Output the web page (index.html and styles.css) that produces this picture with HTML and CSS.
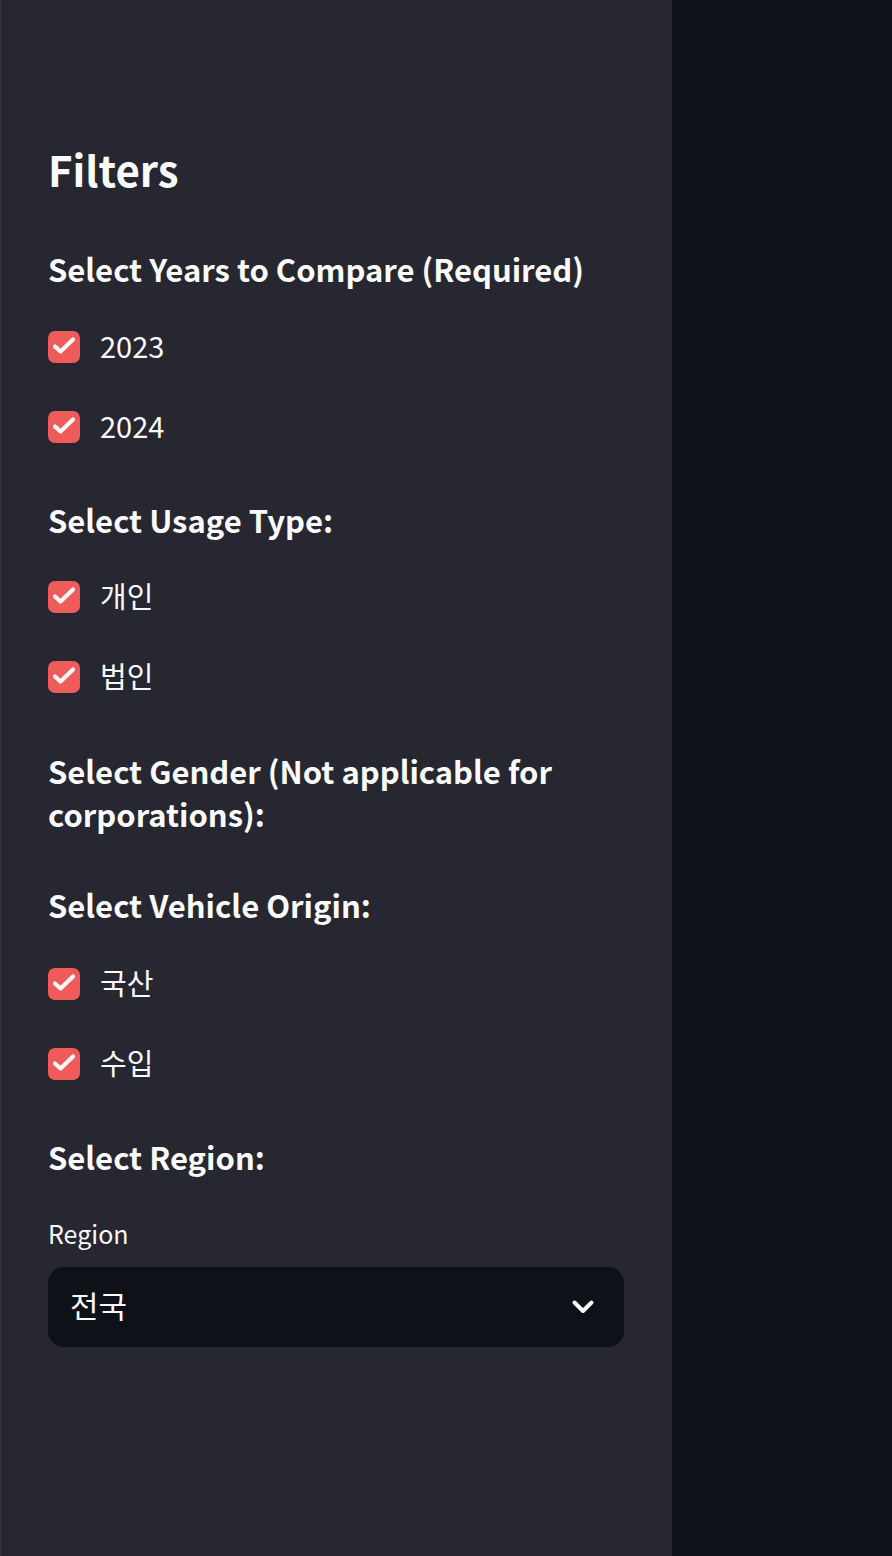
FILE: index.html
```html
<!DOCTYPE html>
<html lang="en">
<head>
<meta charset="utf-8">
<title>Filters</title>
<link rel="stylesheet" href="styles.css">
</head>
<body>
<div class="app">
  <aside class="sidebar">
    <h2 class="title">Filters</h2>

    <h3 class="heading h-years">Select Years to Compare (Required)</h3>
    <label class="check c-first"><span class="box"><svg viewBox="0 0 32 32"><path d="M7 15.5 L12.5 20.5 L25 8.5"/></svg></span><span class="lbl">2023</span></label>
    <label class="check"><span class="box"><svg viewBox="0 0 32 32"><path d="M7 15.5 L12.5 20.5 L25 8.5"/></svg></span><span class="lbl">2024</span></label>

    <h3 class="heading h-tight">Select Usage Type:</h3>
    <label class="check"><span class="box"><svg viewBox="0 0 32 32"><path d="M7 15.5 L12.5 20.5 L25 8.5"/></svg></span><span class="lbl">개인</span></label>
    <label class="check"><span class="box"><svg viewBox="0 0 32 32"><path d="M7 15.5 L12.5 20.5 L25 8.5"/></svg></span><span class="lbl">법인</span></label>

    <h3 class="heading">Select Gender (Not applicable for corporations):</h3>

    <h3 class="heading">Select Vehicle Origin:</h3>
    <label class="check c-loose"><span class="box"><svg viewBox="0 0 32 32"><path d="M7 15.5 L12.5 20.5 L25 8.5"/></svg></span><span class="lbl">국산</span></label>
    <label class="check"><span class="box"><svg viewBox="0 0 32 32"><path d="M7 15.5 L12.5 20.5 L25 8.5"/></svg></span><span class="lbl">수입</span></label>

    <h3 class="heading h-tight">Select Region:</h3>
    <div class="field">
      <div class="field-label">Region</div>
      <div class="select">
        <span class="select-value">전국</span>
        <svg class="chev" viewBox="0 0 24 16"><path d="M3.5 3.5 L12 12 L20.5 3.5"/></svg>
      </div>
    </div>
  </aside>
  <main class="main"></main>
</div>
</body>
</html>
```

FILE: styles.css
```css
* { box-sizing: border-box; }
html, body {
  margin: 0;
  padding: 0;
  height: 100%;
}
body {
  background: #0e1117;
  color: #fafafa;
  font-family: "Noto Sans CJK KR", "Noto Sans", sans-serif;
}
.app {
  display: flex;
  min-height: 1556px;
}
.sidebar {
  width: 672px;
  flex: none;
  background: #262730;
  border-left: 1px solid #33343d;
  padding: 140px 47px 0 47px;
  display: flex;
  flex-direction: column;
}
.main {
  flex: 1;
  background: #0e1117;
}
.title {
  margin: 0;
  font-size: 42px;
  line-height: 58px;
  font-weight: 700;
}
.heading {
  margin: 48px 0 0 0;
  font-size: 31px;
  line-height: 43px;
  font-weight: 700;
}
.heading.h-years { margin-top: 49px; }
.heading.h-tight { margin-top: 47px; }
.check {
  display: flex;
  align-items: center;
  height: 48px;
  margin-top: 32px;
  gap: 20px;
}
.check.c-first { margin-top: 33px; }
.check.c-loose { margin-top: 34px; }
.box {
  width: 32px;
  height: 32px;
  border-radius: 7px;
  background: #ef5b59;
  display: flex;
  align-items: center;
  justify-content: center;
}
.box svg {
  width: 32px;
  height: 32px;
  fill: none;
  stroke: #f7f7f9;
  stroke-width: 4.2;
  stroke-linecap: round;
  stroke-linejoin: round;
}
.lbl {
  font-size: 29px;
  line-height: 44px;
  padding-bottom: 4px;
}
.field {
  margin-top: 35px;
  display: flex;
  flex-direction: column;
}
.field-label {
  font-size: 25px;
  line-height: 40px;
}
.select {
  margin-top: 14px;
  height: 80px;
  width: 576px;
  border-radius: 16px;
  background: #0e1117;
  display: flex;
  align-items: center;
  justify-content: space-between;
  padding: 0 29px 0 22px;
}
.select-value {
  font-size: 31px;
  line-height: 40px;
  padding-bottom: 4px;
}
.chev {
  width: 24px;
  height: 16px;
  fill: none;
  stroke: #fafafa;
  stroke-width: 4;
  stroke-linecap: round;
  stroke-linejoin: round;
}
```
